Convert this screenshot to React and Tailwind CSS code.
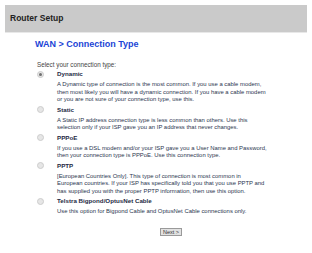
const options = [
  {
    name: "Dynamic",
    checked: true,
    lines: [
      "A Dynamic type of connection is the most common. If you use a cable modem,",
      "then most likely you will have a dynamic connection. If you have a cable modem",
      "or you are not sure of your connection type, use this.",
    ],
  },
  {
    name: "Static",
    lines: [
      "A Static IP address connection type is less common than others. Use this",
      "selection only if your ISP gave you an IP address that never changes.",
    ],
  },
  {
    name: "PPPoE",
    lines: [
      "If you use a DSL modem and/or your ISP gave you a User Name and Password,",
      "then your connection type is PPPoE. Use this connection type.",
    ],
  },
  {
    name: "PPTP",
    lines: [
      "[European Countries Only]. This type of connection is most common in",
      "European countries. If your ISP has specifically told you that you use PPTP and",
      "has supplied you with the proper PPTP information, then use this option.",
    ],
  },
  {
    name: "Telstra Bigpond/OptusNet Cable",
    lines: ["Use this option for Bigpond Cable and OptusNet Cable connections only."],
  },
];

const Radio = ({ checked }) => (
  <div className="w-[7px] h-[7px] rounded-full bg-[#e6e6e6] border border-[#cdcdcd] flex items-center justify-center">
    {checked && <div className="w-[3px] h-[3px] rounded-full bg-[#707070]" />}
  </div>
);

export default function App() {
  return (
    <div
      className="w-[312px] h-[253px] bg-white p-[5px] overflow-hidden"
      style={{ fontFamily: '"Liberation Sans", Arial, sans-serif' }}
    >
      {/* Header */}
      <div className="h-[28px] bg-[#cacaca] border-b border-[#e8e8e8] flex items-center pl-[5px]">
        <span className="text-[8.5px] font-bold text-[#222]">Router Setup</span>
      </div>

      <div className="pl-[30px] pr-[10px]">
        <h1 className="text-[9px] font-bold text-[#2144d6] mt-[6px] leading-[10px]">
          WAN &gt; Connection Type
        </h1>
        <p className="text-[6.3px] text-[#444] mt-[12px] leading-[8px] pl-[2px]">
          Select your connection type:
        </p>

        <div className="mt-[1px] flex flex-col gap-[2px]">
          {options.map((o) => (
            <div key={o.name}>
              <div className="flex items-center h-[8px]">
                <div className="w-[22px] pl-[2px]">
                  <Radio checked={o.checked} />
                </div>
                <span className="text-[6.2px] font-bold text-[#1e2a44]">{o.name}</span>
              </div>
              <div className="pl-[22px] mt-[3px] text-[5.9px] leading-[7.5px] text-[#2b3650]">
                {o.lines.map((l) => (
                  <div key={l} className="whitespace-nowrap">{l}</div>
                ))}
              </div>
            </div>
          ))}
        </div>

        <div className="mt-[12px] pl-[125px]">
          <button className="h-[8px] w-[22px] bg-[#e2e2e2] border border-[#9a9a9a] text-[5.5px] leading-[6px] text-[#333] flex items-center justify-center">
            Next &gt;
          </button>
        </div>
      </div>
    </div>
  );
}
